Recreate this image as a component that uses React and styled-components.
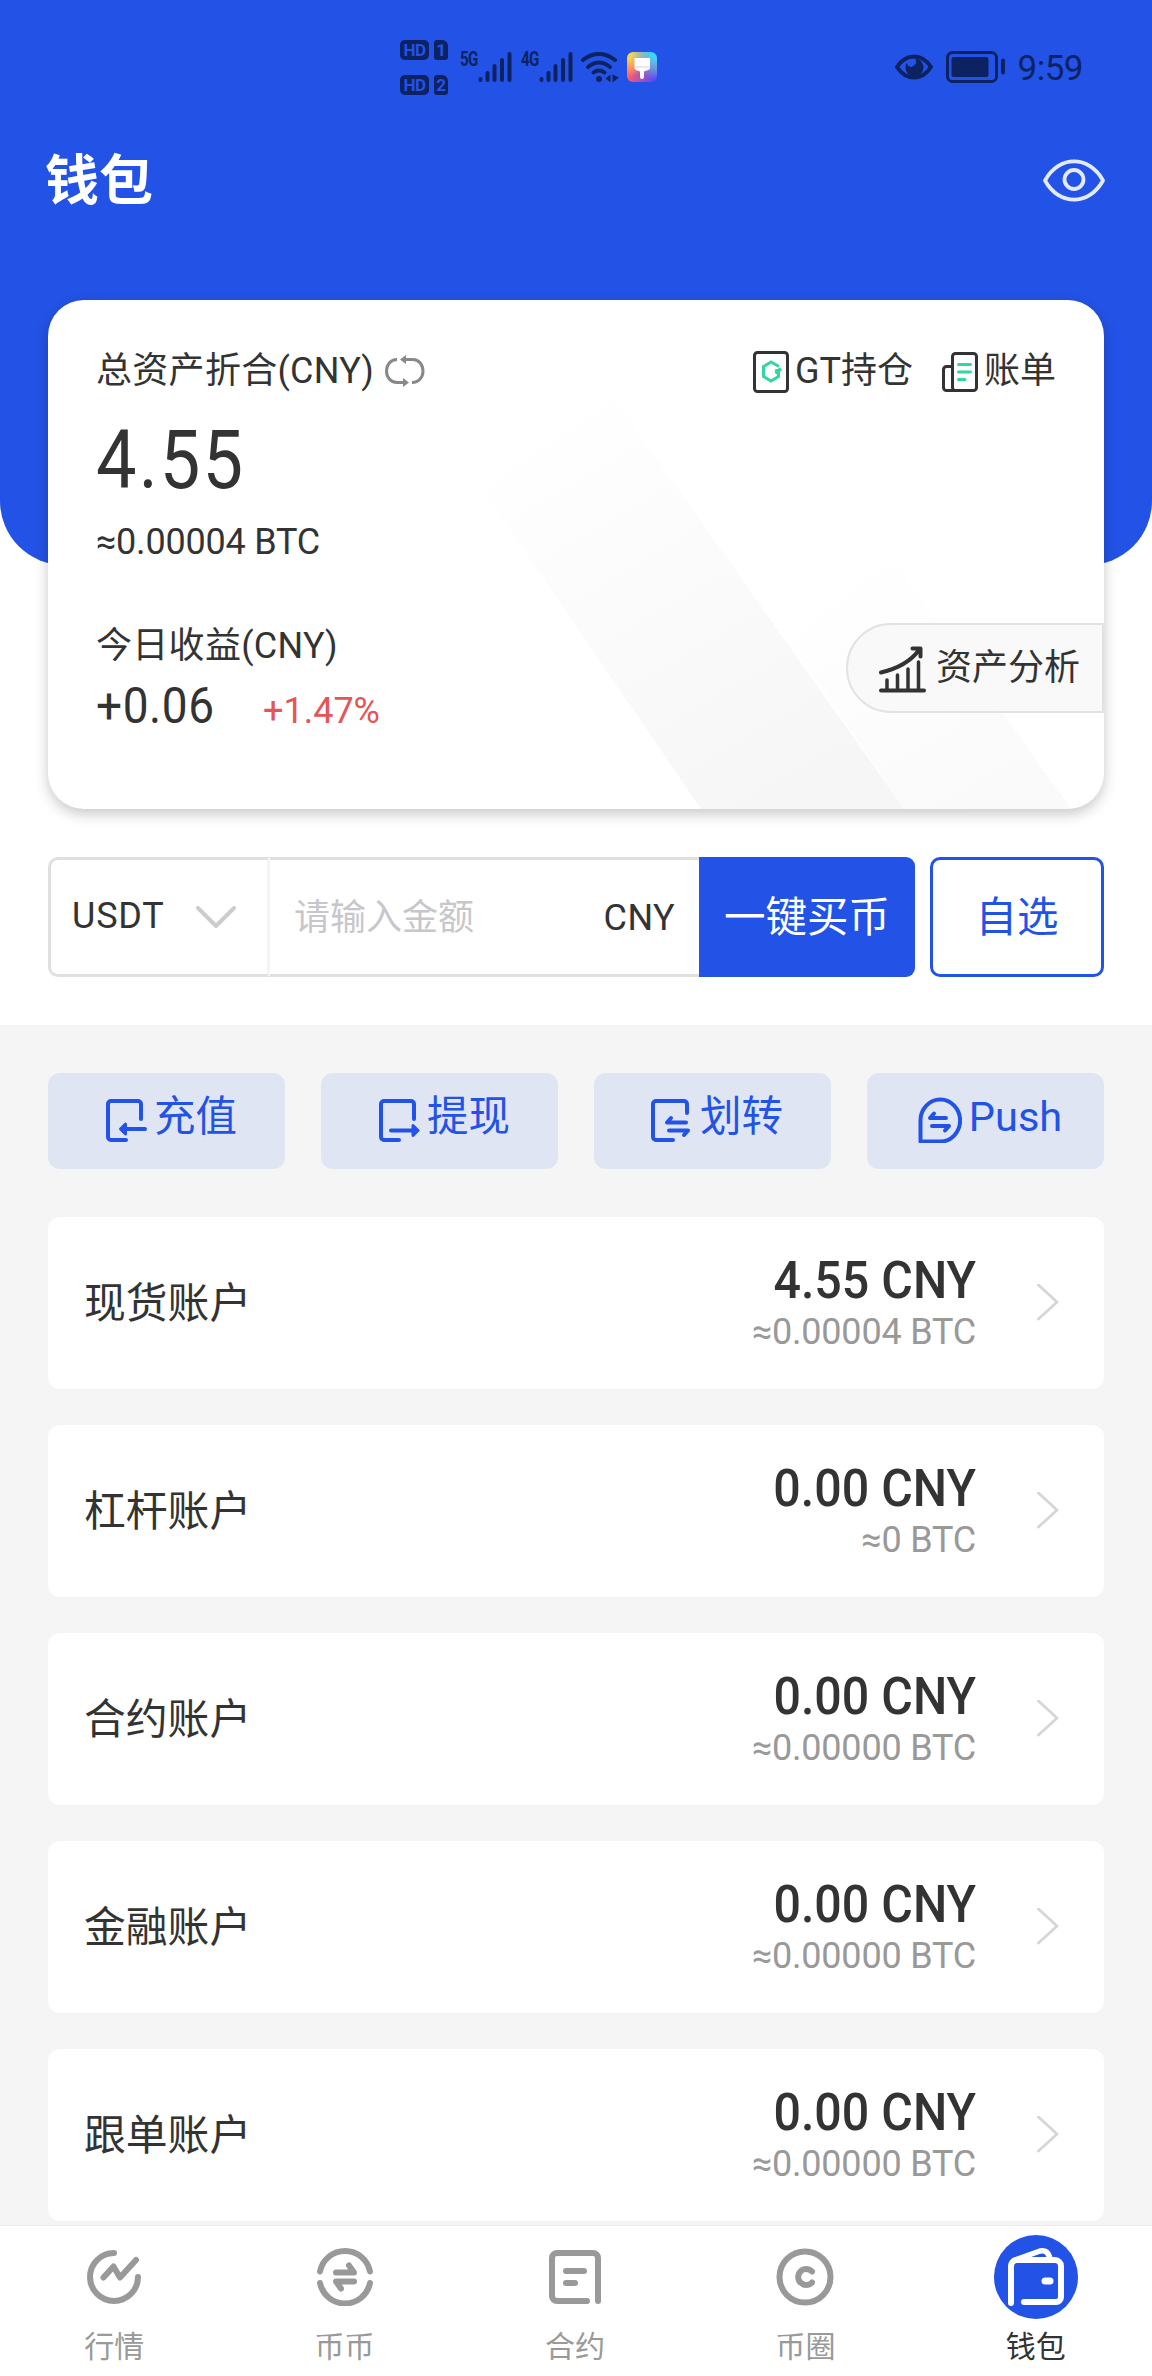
import styled, { createGlobalStyle } from 'styled-components';

const BLUE = '#2353e6';
const NAVY = '#0d2260';

const GlobalStyle = createGlobalStyle`
  * {
    box-sizing: border-box;
  }

  body {
    margin: 0;
    background: #fff;
    color: #333;
    font-family: Roboto, 'Noto Sans CJK SC', sans-serif;
    line-height: 1.2;
  }

  svg {
    display: block;
    flex: none;
  }
`;

const Page = styled.div`
  display: flex;
  flex-direction: column;
  width: 1152px;
  height: 2376px;
  overflow: hidden;
`;

const Header = styled.header`
  flex: none;
  height: 565px;
  background: ${BLUE};
  border-radius: 0 0 64px 64px;
`;

const StatusBar = styled.div`
  display: flex;
  justify-content: space-between;
  height: 134px;
  padding: 0 69px 0 400px;
  color: ${NAVY};
`;

const StatusGroup = styled.div`
  display: flex;
  align-items: center;
`;

const SimList = styled.div`
  display: flex;
  flex-direction: column;
  gap: 15px;
  margin-right: 11px;
`;

const SimRow = styled.div`
  display: flex;
  gap: 5px;
`;

const SimTag = styled.span`
  width: ${({ $wide }) => ($wide ? 29 : 14)}px;
  height: 20px;
  border-radius: ${({ $wide }) => ($wide ? '5px' : '3px 6px 3px 3px')};
  background: ${NAVY};
  color: ${BLUE};
  font-size: 17px;
  font-weight: 700;
  line-height: 20px;
  letter-spacing: -0.5px;
  text-align: center;
`;

const Network = styled.span`
  align-self: flex-start;
  width: 18px;
  margin: 49px 0 0 ${({ $left = 0 }) => $left}px;
  font-size: 21px;
  font-weight: 700;
  line-height: 20px;
  letter-spacing: -1px;
  transform: scaleX(0.72);
  transform-origin: left;
`;

const WifiBox = styled.div`
  margin: 0 8px;
`;

const BatteryBox = styled.div`
  margin: 0 12px 0 13px;
`;

const Clock = styled.span`
  margin-top: 3px;
  font-size: 35px;
  line-height: 40px;
  letter-spacing: -0.5px;
`;

const ThemeBadge = styled.span`
  width: 30px;
  height: 30px;
  border-radius: 6px;
  background:
    radial-gradient(circle at 100% 0, #3fd4fb 15%, transparent 65%),
    radial-gradient(circle at 0 0, #ffd24a 15%, transparent 60%),
    radial-gradient(circle at 100% 100%, #5b4bf5 10%, transparent 70%),
    #ff5a6e;
`;

const TitleBar = styled.div`
  display: flex;
  align-items: center;
  justify-content: space-between;
  height: 92px;
  padding: 0 47px 0 45px;
`;

const Title = styled.h1`
  margin: 3px 0 0;
  color: #fff;
  font-size: 54px;
  font-weight: 700;
  line-height: 60px;
`;

const Card = styled.section`
  position: relative;
  flex: none;
  height: 509px;
  margin: -265px 48px 0;
  padding: 46px 0 0 48px;
  border-radius: 36px;
  background: #fff;
  box-shadow: 0 5px 14px rgba(0, 0, 0, 0.22);
  overflow: hidden;
`;

const CardShadow = styled.div`
  position: absolute;
  inset: 0;
`;

const CardBody = styled.div`
  position: relative;
`;

const CardHead = styled.div`
  display: flex;
  align-items: center;
  height: 50px;
  padding-right: 48px;
  font-size: 36px;
`;

const HeadLabel = styled.span`
  margin-right: 11px;
  padding-top: 2px;
  letter-spacing: 0.3px;
`;

const HeadLink = styled.span`
  display: flex;
  align-items: center;
  gap: ${({ $gap }) => $gap}px;
  margin-left: ${({ $push }) => $push};
  padding-top: 2px;
`;

const Total = styled.div`
  margin-top: 26px;
  font-size: 82px;
  line-height: 76px;
  letter-spacing: 2.4px;
  transform: scaleX(0.88);
  transform-origin: left;
`;

const TotalBtc = styled.div`
  margin-top: 22px;
  font-size: 36px;
  line-height: 44px;
  letter-spacing: -0.2px;
`;

const CardFoot = styled.div`
  display: flex;
  justify-content: space-between;
  margin-top: 59px;
`;

const TodayLabel = styled.div`
  margin-top: 1px;
  font-size: 36px;
  line-height: 44px;
  letter-spacing: 0.3px;
`;

const TodayRow = styled.div`
  display: flex;
  align-items: baseline;
  margin-top: 13px;
  line-height: 50px;
`;

const Today = styled.span`
  width: 167px;
  font-size: 50px;
  letter-spacing: 0.6px;
  transform: scaleX(0.92);
  transform-origin: left;
`;

const Percent = styled.span`
  color: #e35656;
  font-size: 36px;
`;

const Analysis = styled.div`
  display: flex;
  align-items: center;
  gap: 9px;
  width: 258px;
  height: 90px;
  padding: 2px 0 0 31px;
  border: 2px solid #e2e2e2;
  border-radius: 45px 0 0 45px;
  background: rgba(248, 248, 248, 0.8);
  font-size: 36px;
`;

const BuyBar = styled.section`
  display: flex;
  flex: none;
  height: 120px;
  margin: 48px 48px;
`;

const CoinSelect = styled.div`
  display: flex;
  align-items: center;
  justify-content: space-between;
  width: 222px;
  padding: 0 31px 0 21px;
  border: 3px solid #e0e0e0;
  border-right-color: #f4f4f4;
  border-radius: 10px 0 0 10px;
  font-size: 36px;
  letter-spacing: 0.8px;
`;

const Amount = styled.div`
  display: flex;
  align-items: center;
  justify-content: space-between;
  width: 429px;
  padding: 3px 24px 0;
  border: solid #e0e0e0;
  border-width: 3px 0;
  font-size: 36px;
  letter-spacing: 0.4px;
`;

const Placeholder = styled.span`
  color: #c7c7cb;
  letter-spacing: 0;
`;

const BuyButton = styled.div`
  display: flex;
  align-items: center;
  justify-content: center;
  width: 216px;
  margin-right: 15px;
  padding: 2px 0 0;
  border-radius: 0 9px 9px 0;
  background: ${BLUE};
  color: #fff;
  font-size: 41.5px;
`;

const PickButton = styled.div`
  display: flex;
  flex: 1;
  align-items: center;
  justify-content: center;
  padding-top: 2px;
  border: 3px solid ${BLUE};
  border-radius: 10px;
  color: ${BLUE};
  font-size: 41.5px;
`;

const Content = styled.main`
  display: flex;
  flex: 1;
  flex-direction: column;
  gap: 48px;
  min-height: 0;
  padding: 48px 48px 0;
  background: #f5f5f5;
  overflow: hidden;
`;

const Actions = styled.div`
  display: grid;
  grid-template-columns: repeat(4, 1fr);
  gap: 36px;
`;

const Action = styled.div`
  display: flex;
  align-items: center;
  justify-content: center;
  gap: ${({ $gap }) => $gap}px;
  height: 96px;
  padding: 0 0 2px 9px;
  border-radius: 12px;
  background: #dfe5f3;
  color: ${BLUE};
  font-size: 41.5px;
`;

const ActionText = styled.span`
  margin-bottom: 6px;
`;

const Accounts = styled.div`
  display: flex;
  flex-direction: column;
  gap: 36px;
`;

const Account = styled.div`
  display: flex;
  align-items: center;
  height: 172px;
  padding: 0 45px 0 36px;
  border-radius: 12px;
  background: #fff;
`;

const AccountName = styled.span`
  flex: 1;
  padding-top: 2px;
  font-size: 41.8px;
`;

const Balance = styled.div`
  margin-right: 61px;
  text-align: right;
`;

const BalanceCny = styled.div`
  font-size: 52px;
  font-weight: 500;
  line-height: 58px;
  transform: scaleX(0.93);
  transform-origin: right;
`;

const BalanceBtc = styled.div`
  color: #999;
  font-size: 36px;
  line-height: 44px;
  letter-spacing: -0.2px;
`;

const TabBar = styled.nav`
  display: grid;
  flex: none;
  grid-template-columns: repeat(5, 1fr);
  height: 151px;
  border-top: 1px solid #ebebeb;
  background: #fff;
`;

const Tab = styled.div`
  display: flex;
  flex-direction: column;
  align-items: center;
  padding: 9px 2px 0 0;
  color: ${({ $active }) => ($active ? '#333' : '#999')};
  font-size: 30px;
  line-height: 40px;
`;

const TabIcon = styled.div`
  display: flex;
  align-items: center;
  justify-content: center;
  width: 84px;
  height: 84px;
  margin-bottom: 8px;
  border-radius: 50%;
  background: ${({ $active }) => ($active ? BLUE : 'transparent')};
`;

const Icon = ({ w, h, stroke = 'currentColor', width = 4, children }) => (
  <svg
    width={w}
    height={h}
    viewBox={`0 0 ${w} ${h}`}
    fill='none'
    stroke={stroke}
    strokeWidth={width}
    strokeLinecap='round'
    strokeLinejoin='round'
  >
    {children}
  </svg>
);

const Signal = () => (
  <Icon w={34} h={30}>
    <path d='M2.5 27v1M9.5 21v7M16.5 14v14M24 8v20M31.5 2v26' />
  </Icon>
);

const Wifi = () => (
  <Icon w={38} h={30}>
    <path d='M2 8Q18 -4 34 8' />
    <path d='M7 15Q18 6 29 15' />
    <path d='M12.5 20.5Q18 16.5 23.5 20.5' />
    <circle cx='18' cy='27' r='3' fill='currentColor' stroke='none' />
    <path
      d='M29.5 22.5v8l-5-4zM31.5 22.5v8l6.5-5z'
      fill='currentColor'
      stroke='none'
    />
  </Icon>
);

const Brush = () => (
  <Icon w={30} h={30}>
    <path
      d='M7.5 6h15.5v10c0 3-6 2-6 4v5a2 2 0 0 1-4 0v-5c0-2-5.5-1-5.5-4z'
      fill='#fff'
      stroke='none'
    />
    <path d='M8 15h14' stroke='#d9c7e8' strokeWidth='1' />
  </Icon>
);

const StatusEye = () => (
  <Icon w={38} h={26}>
    <path d='M2 13C11-1 27-1 36 13 27 27 11 27 2 13z' />
    <path
      d='M12 8.5a4 4 0 0 0 7 3 4.5 4.5 0 0 0 1-7 9 9 0 1 1-8 4z'
      fill='currentColor'
      stroke='none'
    />
  </Icon>
);

const Battery = () => (
  <Icon w={60} h={32}>
    <rect x='1.5' y='1.5' width='49' height='29' rx='5' strokeWidth='3' />
    <rect
      x='5.5'
      y='6'
      width='37'
      height='20'
      rx='2'
      fill='currentColor'
      stroke='none'
    />
    <path d='M57 9.5v12' />
  </Icon>
);

const HeaderEye = () => (
  <Icon w={62} h={43} stroke='#e3eafd' width={3.8}>
    <path d='M2 21.5C16-4 46-4 60 21.5 46 47 16 47 2 21.5z' />
    <circle cx='31' cy='20.5' r='9.5' />
  </Icon>
);

const Refresh = () => (
  <Icon w={40} h={32} stroke='#888' width={3}>
    <path
      d='M12 4.5C5.5 4.5 1.5 10 1.5 16S5.5 27.5 12 27.5h7'
      strokeLinecap='butt'
    />
    <path
      d='M27 27.5C34 27.5 38 22 38 16S34 4.5 28 4.5h-8'
      strokeLinecap='butt'
    />
    <path
      d='M15 4.5l6-4.5v9zM24 27.5l-6-4.5v9z'
      fill='#888'
      stroke='none'
    />
  </Icon>
);

const GtIcon = () => (
  <Icon w={36} h={42} stroke='#333' width={3}>
    <rect x='1.5' y='1.5' width='33' height='39' rx='3' />
    <path
      d='M26 15.5l-8-4.5-7.5 4.5v10l7.5 4.500 7.5-4.500v-6l-3 3M22 20l6.5-1.500'
      stroke='#32d69f'
      strokeLinecap='butt'
      strokeLinejoin='miter'
    />
  </Icon>
);

const BillIcon = () => (
  <Icon w={36} h={40} stroke='#333' width={3}>
    <rect x='10.5' y='1.5' width='24' height='37' rx='3' />
    <path d='M10.5 14.5h-6a3 3 0 0 0-3 3v18a3 3 0 0 0 3 3h8' />
    <path d='M16.5 12.5h12M16.5 20h12M16.5 27.5h6.5' stroke='#32d69f' />
  </Icon>
);

const ChartIcon = () => (
  <Icon w={48} h={47} stroke='#333'>
    <path d='M2 44.5h43' />
    <path d='M8 44V34M18.5 44V29M29 44V23M39.5 44V16' strokeWidth='3.5' />
    <path d='M2 26.5C21 22 32 15 40 4M33.5 2.5h8v8' />
  </Icon>
);

const ChevronDown = () => (
  <Icon w={40} h={26} stroke='#ccc'>
    <path d='M2 4l18 18L38 4' />
  </Icon>
);

const ChevronRight = () => (
  <Icon w={22} h={38} stroke='#d6d6d6' width={2.8}>
    <path d='M1.5 1l18.5 17L1.5 35' />
  </Icon>
);

const DepositIcon = () => (
  <Icon w={42} h={44}>
    <path d='M36 21V6a3 3 0 0 0-3-3H6a3 3 0 0 0-3 3v33a3 3 0 0 0 3 3h15' />
    <path d='M40 31H18' />
    <path d='M15.5 31l5-5v10z' fill='currentColor' strokeWidth='3' />
  </Icon>
);

const WithdrawIcon = () => (
  <Icon w={42} h={44}>
    <path d='M36 21V6a3 3 0 0 0-3-3H6a3 3 0 0 0-3 3v33a3 3 0 0 0 3 3h15' />
    <path d='M13 32.5h23' />
    <path d='M40 32.5l-5-5v10z' fill='currentColor' strokeWidth='3' />
  </Icon>
);

const TransferIcon = () => (
  <Icon w={40} h={44}>
    <path d='M36 15V6a3 3 0 0 0-3-3H5a3 3 0 0 0-3 3v33a3 3 0 0 0 3 3h17' />
    <path d='M35 24.5H16l4-4.5M18 32.5h19l-4 4.5' strokeWidth='4' />
  </Icon>
);

const PushIcon = () => (
  <Icon w={44} h={46}>
    <path d='M2.5 44.5V23.5A19.8 21 0 1 1 22 44.5z' />
    <path d='M28 21H12l4-4.5M14 29h17l-4 4.5' strokeWidth='4' />
  </Icon>
);

const MarketIcon = () => (
  <Icon w={56} h={56} width={6}>
    <path d='M28 4A24 24 0 1 0 52 28' />
    <path d='M17.5 28.5L27.5 17.5l6.5 11L50 11' />
  </Icon>
);

const SpotIcon = () => (
  <Icon w={58} h={58} width={6}>
    <path d='M4 23.5a25.5 25.5 0 0 1 50 0M4 35a25.5 25.5 0 0 0 50 0' />
    <path d='M20 24.5h18l-5-7M38 33.5H20l5 7' />
  </Icon>
);

const ContractIcon = () => (
  <Icon w={54} h={56} width={6}>
    <path d='M50 52V9a5 5 0 0 0-5-5H9a5 5 0 0 0-5 5v38a5 5 0 0 0 5 5h30' />
    <path d='M18 22h18M18 34h9' />
  </Icon>
);

const CircleIcon = () => (
  <Icon w={58} h={58} width={6}>
    <circle cx='29' cy='29' r='25.5' />
    <path d='M36 23.5a8 8 0 1 0 0 11' />
  </Icon>
);

const WalletIcon = () => (
  <Icon w={58} h={60} stroke='#fff' width={6}>
    <path d='M4 56V19a6 6 0 0 1 5-6h39a6 6 0 0 1 6 6v31a5 5 0 0 1-5 5H17' />
    <path d='M8 13L33 4q8-2 10 8' strokeWidth='5.5' />
    <path d='M38 34h5' strokeWidth='7' />
  </Icon>
);

const actions = [
  { text: '充值', icon: <DepositIcon />, gap: 7 },
  { text: '提现', icon: <WithdrawIcon />, gap: 7 },
  { text: '划转', icon: <TransferIcon />, gap: 9 },
  { text: 'Push', icon: <PushIcon />, gap: 7 },
];

const accounts = [
  { name: '现货账户', cny: '4.55', btc: '0.00004' },
  { name: '杠杆账户', cny: '0.00', btc: '0' },
  { name: '合约账户', cny: '0.00', btc: '0.00000' },
  { name: '金融账户', cny: '0.00', btc: '0.00000' },
  { name: '跟单账户', cny: '0.00', btc: '0.00000' },
];

const tabs = [
  { text: '行情', icon: <MarketIcon /> },
  { text: '币币', icon: <SpotIcon /> },
  { text: '合约', icon: <ContractIcon /> },
  { text: '币圈', icon: <CircleIcon /> },
  { text: '钱包', icon: <WalletIcon />, active: true },
];

const CardStripes = () => (
  <CardShadow>
    <svg width='1056' height='509' viewBox='0 0 1056 509'>
      <defs>
        <linearGradient id='stripe' x1='0.1' y1='0' x2='0.7' y2='1'>
          <stop offset='0.05' stopColor='#fff' />
          <stop offset='1' stopColor='#f6f6f6' />
        </linearGradient>
        <linearGradient id='stripeLight' x1='0.1' y1='0' x2='0.7' y2='1'>
          <stop offset='0.05' stopColor='#fff' />
          <stop offset='1' stopColor='#fafafa' />
        </linearGradient>
      </defs>
      <path d='M842 255l181 254H856L742 341z' fill='url(#stripeLight)' />
      <path d='M564 95l292 414H653L435 190z' fill='url(#stripe)' />
    </svg>
  </CardShadow>
);

const App = () => {
  return (
    <Page>
      <GlobalStyle />
      <Header>
        <StatusBar>
          <StatusGroup>
            <SimList>
              {['1', '2'].map((sim) => (
                <SimRow key={sim}>
                  <SimTag $wide>HD</SimTag>
                  <SimTag>{sim}</SimTag>
                </SimRow>
              ))}
            </SimList>
            <Network $left={1}>5G</Network>
            <Signal />
            <Network $left={9}>4G</Network>
            <Signal />
            <WifiBox>
              <Wifi />
            </WifiBox>
            <ThemeBadge>
              <Brush />
            </ThemeBadge>
          </StatusGroup>
          <StatusGroup>
            <StatusEye />
            <BatteryBox>
              <Battery />
            </BatteryBox>
            <Clock>9:59</Clock>
          </StatusGroup>
        </StatusBar>
        <TitleBar>
          <Title>钱包</Title>
          <HeaderEye />
        </TitleBar>
      </Header>

      <Card>
        <CardStripes />
        <CardBody>
          <CardHead>
            <HeadLabel>总资产折合(CNY)</HeadLabel>
            <Refresh />
            <HeadLink $gap={6} $push='auto'>
              <GtIcon />
              GT持仓
            </HeadLink>
            <HeadLink $gap={6} $push='29px'>
              <BillIcon />
              账单
            </HeadLink>
          </CardHead>
          <Total>4.55</Total>
          <TotalBtc>≈0.00004 BTC</TotalBtc>
          <CardFoot>
            <div>
              <TodayLabel>今日收益(CNY)</TodayLabel>
              <TodayRow>
                <Today>+0.06</Today>
                <Percent>+1.47%</Percent>
              </TodayRow>
            </div>
            <Analysis>
              <ChartIcon />
              资产分析
            </Analysis>
          </CardFoot>
        </CardBody>
      </Card>

      <BuyBar>
        <CoinSelect>
          USDT
          <ChevronDown />
        </CoinSelect>
        <Amount>
          <Placeholder>请输入金额</Placeholder>
          CNY
        </Amount>
        <BuyButton>一键买币</BuyButton>
        <PickButton>自选</PickButton>
      </BuyBar>

      <Content>
        <Actions>
          {actions.map(({ text, icon, gap }) => (
            <Action key={text} $gap={gap}>
              {icon}
              <ActionText>{text}</ActionText>
            </Action>
          ))}
        </Actions>
        <Accounts>
          {accounts.map(({ name, cny, btc }) => (
            <Account key={name}>
              <AccountName>{name}</AccountName>
              <Balance>
                <BalanceCny>{cny} CNY</BalanceCny>
                <BalanceBtc>≈{btc} BTC</BalanceBtc>
              </Balance>
              <ChevronRight />
            </Account>
          ))}
        </Accounts>
      </Content>

      <TabBar>
        {tabs.map(({ text, icon, active }) => (
          <Tab key={text} $active={active}>
            <TabIcon $active={active}>{icon}</TabIcon>
            {text}
          </Tab>
        ))}
      </TabBar>
    </Page>
  );
};

export default App;
